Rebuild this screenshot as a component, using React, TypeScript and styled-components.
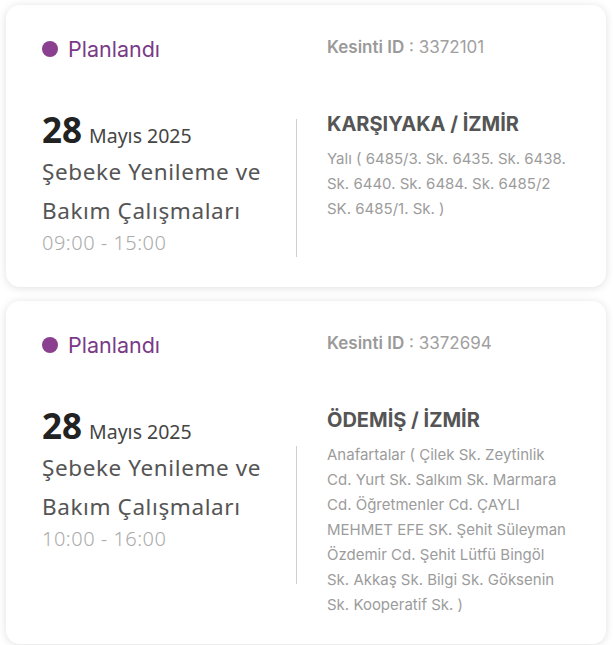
import React from "react";
import styled, { createGlobalStyle } from "styled-components";

const Global = createGlobalStyle`
  html, body { margin: 0; padding: 0; background: #ffffff; }
  * { box-sizing: border-box; }
`;

const Page = styled.div`
  display: flex;
  flex-direction: column;
  gap: 14px;
  padding: 5px 7px 2px 6px;
  width: 613px;
`;

const Card = styled.div`
  background: #fff;
  border-radius: 14px;
  box-shadow: 0 1px 8px rgba(0, 0, 0, 0.13);
  padding: 30px 37px 27px 36px;
  display: flex;
  flex-direction: column;
`;

const Header = styled.div`
  display: flex;
  align-items: center;
  height: 26px;
`;

const Status = styled.div`
  width: 285px;
  display: flex;
  align-items: center;
  gap: 10px;
  font-family: "Inter", sans-serif;
  font-size: 21.5px;
  color: #7a3a87;
  margin-top: 2px;
`;

const Dot = styled.span`
  width: 16px;
  height: 16px;
  border-radius: 50%;
  background: #8a3f8f;
  flex: none;
`;

const OutageId = styled.div`
  font-family: "Inter", sans-serif;
  font-size: 17px;
  color: #a0a0a0;
  margin-top: -3px;
  b { font-weight: 600; color: #9a9a9a; }
`;

const Body = styled.div`
  display: flex;
  align-items: flex-start;
  margin-top: 61px;
`;

const Left = styled.div`
  width: 254px;
  flex: none;
  display: flex;
  flex-direction: column;
  padding-bottom: 4px;
  font-family: "Noto Sans", sans-serif;
`;

const DateLine = styled.div`
  display: flex;
  align-items: baseline;
  gap: 7px;
  line-height: 40px;
  margin-top: -12px;
  margin-bottom: -4px;
`;

const Day = styled.span`
  font-size: 35px;
  font-weight: 700;
  color: #222;
`;

const Month = styled.span`
  font-size: 19.5px;
  color: #454545;
`;

const Title = styled.div`
  font-size: 22.5px;
  line-height: 39px;
  color: #555;
  letter-spacing: 0.6px;
`;

const Time = styled.div`
  font-size: 20px;
  line-height: 26px;
  color: #ababab;
  font-weight: 300;
  letter-spacing: 0.5px;
`;

const Divider = styled.div`
  width: 1px;
  height: 138px;
  background: #cfcfcf;
  align-self: center;
  flex: none;
  margin-top: -6px;
`;

const Right = styled.div`
  margin-left: 30px;
  flex: 1;
  font-family: "Inter", sans-serif;
`;

const Place = styled.div`
  font-size: 20px;
  font-weight: 700;
  color: #555;
  line-height: 24px;
  margin-top: -10px;
  margin-bottom: 10px;
`;

const Address = styled.div`
  font-size: 15px;
  line-height: 25px;
  color: #9c9c9c;
`;

type Item = {
  id: string;
  time: string;
  place: string;
  address: string;
};

const items: Item[] = [
  {
    id: "3372101",
    time: "09:00 - 15:00",
    place: "KARŞIYAKA / İZMİR",
    address: "Yalı ( 6485/3. Sk. 6435. Sk. 6438. Sk. 6440. Sk. 6484. Sk. 6485/2 SK. 6485/1. Sk. )",
  },
  {
    id: "3372694",
    time: "10:00 - 16:00",
    place: "ÖDEMİŞ / İZMİR",
    address:
      "Anafartalar ( Çilek Sk. Zeytinlik Cd. Yurt Sk. Salkım Sk. Marmara Cd. Öğretmenler Cd. ÇAYLI MEHMET EFE SK. Şehit Süleyman Özdemir Cd. Şehit Lütfü Bingöl Sk. Akkaş Sk. Bilgi Sk. Göksenin Sk. Kooperatif Sk. )",
  },
];

export default function App() {
  return (
    <>
      <Global />
      <Page>
        {items.map((it) => (
          <Card key={it.id}>
            <Header>
              <Status>
                <Dot />
                Planlandı
              </Status>
              <OutageId>
                <b>Kesinti ID</b> : {it.id}
              </OutageId>
            </Header>
            <Body>
              <Left>
                <DateLine>
                  <Day>28</Day>
                  <Month>Mayıs 2025</Month>
                </DateLine>
                <Title>Şebeke Yenileme ve Bakım Çalışmaları</Title>
                <Time>{it.time}</Time>
              </Left>
              <Divider />
              <Right>
                <Place>{it.place}</Place>
                <Address>{it.address}</Address>
              </Right>
            </Body>
          </Card>
        ))}
      </Page>
    </>
  );
}
